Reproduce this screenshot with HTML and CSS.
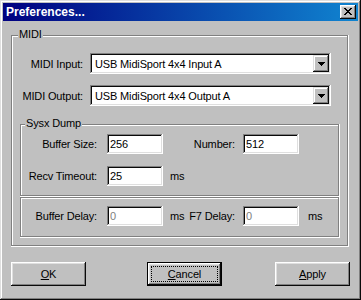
FILE: index.html
```html
<!DOCTYPE html>
<html lang="en">
<head>
    <meta charset="UTF-8">
    <meta name="viewport" content="width=device-width, initial-scale=1.0">
    <title>Preferences...</title>
    <link rel="stylesheet" href="styles.css">
</head>
<body>

    <div class="window">
        <div class="title-bar">
            <span class="title">Preferences...</span>
            <button class="close-btn" aria-label="Close">
                <svg width="8" height="7" viewBox="0 0 8 7"><path d="M0 0h2v1H0zM6 0h2v1H6zM1 1h2v1H1zM5 1h2v1H5zM2 2h4v1H2zM3 3h2v1H3zM2 4h4v1H2zM1 5h2v1H1zM5 5h2v1H5zM0 6h2v1H0zM6 6h2v1H6z" fill="#000"/></svg>
            </button>
        </div>

        <div class="client">
            <div class="group midi-group">
                <span class="group-label midi-legend">MIDI</span>

                <div class="combo-row">
                    <label class="midi-label">MIDI Input:</label>
                    <div class="combo">
                        <span class="combo-text">USB MidiSport 4x4 Input A</span>
                        <span class="drop-btn"><svg width="7" height="4" viewBox="0 0 7 4"><path d="M0 0h7v1H0zM1 1h5v1H1zM2 2h3v1H2zM3 3h1v1H3z" fill="#000"/></svg></span>
                    </div>
                </div>

                <div class="combo-row">
                    <label class="midi-label">MIDI Output:</label>
                    <div class="combo">
                        <span class="combo-text">USB MidiSport 4x4 Output A</span>
                        <span class="drop-btn"><svg width="7" height="4" viewBox="0 0 7 4"><path d="M0 0h7v1H0zM1 1h5v1H1zM2 2h3v1H2zM3 3h1v1H3z" fill="#000"/></svg></span>
                    </div>
                </div>

                <div class="group sysx-group">
                    <span class="group-label sysx-legend">Sysx Dump</span>

                    <div class="field-row">
                        <label class="field-label" for="bufferSize">Buffer Size:</label>
                        <input class="edit" type="text" id="bufferSize" value="256">
                        <div class="mid">
                            <label class="mid-label" for="number">Number:</label>
                        </div>
                        <input class="edit" type="text" id="number" value="512">
                    </div>

                    <div class="field-row">
                        <label class="field-label" for="recvTimeout">Recv Timeout:</label>
                        <input class="edit" type="text" id="recvTimeout" value="25">
                        <div class="mid">
                            <span class="unit">ms</span>
                        </div>
                    </div>
                </div>

                <div class="group delay-group">
                    <div class="field-row">
                        <label class="field-label" for="bufferDelay">Buffer Delay:</label>
                        <input class="edit" type="text" id="bufferDelay" value="0" disabled>
                        <div class="mid">
                            <span class="unit">ms</span>
                            <label class="mid-label" for="f7Delay">F7 Delay:</label>
                        </div>
                        <input class="edit" type="text" id="f7Delay" value="0" disabled>
                        <span class="unit-end">ms</span>
                    </div>
                </div>
            </div>

            <div class="buttons">
                <button class="btn"><u>O</u>K</button>
                <button class="btn btn-default btn-cancel"><u>C</u>ancel</button>
                <button class="btn btn-apply"><u>A</u>pply</button>
            </div>
        </div>
    </div>

</body>
</html>
```

FILE: styles.css
```css
body {
    font-family: 'Liberation Sans', Arial, sans-serif;
    font-size: 11px;
    letter-spacing: -0.15px;
    margin: 0;
    padding: 0;
    color: #000;
}

.window {
    width: 361px;
    height: 300px;
    box-sizing: border-box;
    padding: 3px;
    background-color: #c0c0c0;
    box-shadow: inset -1px -1px #0a0a0a, inset 1px 1px #dfdfdf, inset -2px -2px #808080, inset 2px 2px #fff;
}

.title-bar {
    height: 18px;
    display: flex;
    align-items: center;
    justify-content: space-between;
    padding: 0 2px 0 3px;
    background: linear-gradient(90deg, #000080, #1084d0);
}

.title {
    color: #fff;
    font-weight: bold;
    font-size: 12px;
    letter-spacing: 0;
}

.close-btn {
    width: 16px;
    height: 14px;
    padding: 0 1px 1px 0;
    border: none;
    background-color: #c0c0c0;
    display: flex;
    align-items: center;
    justify-content: center;
    box-shadow: inset -1px -1px #0a0a0a, inset 1px 1px #fff, inset -2px -2px #808080, inset 2px 2px #dfdfdf;
}

.close-btn svg,
.drop-btn svg {
    display: block;
}

/* etched group boxes */
.group {
    position: relative;
    box-sizing: border-box;
    box-shadow: inset -1px -1px #fff, inset -2px -2px #808080, inset 1px 1px #808080, inset 2px 2px #fff;
}

.group-label {
    position: absolute;
    top: -7px;
    line-height: 13px;
    padding: 0 1px;
    background-color: #c0c0c0;
}

.midi-legend {
    left: 7px;
}

.sysx-legend {
    left: 5px;
}

.midi-group {
    width: 338px;
    margin: 14px 0 0 8px;
    padding: 18px 0 9px;
}

.combo-row {
    display: flex;
    align-items: center;
    height: 21px;
}

.combo-row + .combo-row {
    margin-top: 11px;
}

.midi-label {
    width: 72px;
    margin-right: 7px;
    text-align: right;
}

.combo {
    width: 241px;
    height: 21px;
    box-sizing: border-box;
    padding: 2px;
    display: flex;
    align-items: center;
    background-color: #fff;
    box-shadow: inset -1px -1px #fff, inset 1px 1px #808080, inset -2px -2px #dfdfdf, inset 2px 2px #0a0a0a;
}

.combo-text {
    flex: 1;
    padding-left: 3px;
}

.drop-btn {
    width: 16px;
    height: 17px;
    display: flex;
    align-items: center;
    justify-content: center;
    background-color: #c0c0c0;
    box-shadow: inset -1px -1px #0a0a0a, inset 1px 1px #dfdfdf, inset -2px -2px #808080, inset 2px 2px #fff;
}

.sysx-group {
    width: 320px;
    margin: 18px 0 0 9px;
    padding: 10px 0 11px;
}

.delay-group {
    width: 320px;
    margin-left: 9px;
    padding: 9px 0 12px;
}

.field-row {
    display: flex;
    align-items: center;
    height: 20px;
}

.field-row + .field-row {
    margin-top: 12px;
}

.field-label {
    width: 77px;
    flex: none;
    text-align: right;
}

.edit {
    width: 56px;
    height: 20px;
    box-sizing: border-box;
    margin: 0 0 0 10px;
    padding: 0 2px 0 3px;
    border: none;
    font-family: 'Liberation Sans', Arial, sans-serif;
    font-size: 11px;
    letter-spacing: -0.15px;
    color: #000;
    background-color: #fff;
    box-shadow: inset -1px -1px #fff, inset 1px 1px #808080, inset -2px -2px #dfdfdf, inset 2px 2px #0a0a0a;
}

.edit:disabled {
    color: #808080;
    background-color: #fff;
}

.mid {
    width: 72px;
    display: flex;
    align-items: center;
}

.mid + .edit {
    margin-left: 8px;
}

.unit {
    padding-left: 7px;
}

.mid-label {
    margin-left: auto;
}

.unit-end {
    margin-left: 9px;
}

.buttons {
    display: flex;
    margin-top: 15px;
    padding-left: 8px;
}

.btn {
    width: 75px;
    height: 24px;
    box-sizing: border-box;
    padding: 0;
    border: none;
    font-family: 'Liberation Sans', Arial, sans-serif;
    font-size: 11px;
    letter-spacing: -0.15px;
    color: #000;
    background-color: #c0c0c0;
    box-shadow: inset -1px -1px #0a0a0a, inset 1px 1px #fff, inset -2px -2px #808080, inset 2px 2px #dfdfdf;
}

.btn-default {
    border: 1px solid #000;
    outline: 1px dotted #000;
    outline-offset: -5px;
}

.btn-cancel {
    margin-left: 61px;
}

.btn-apply {
    margin-left: 53px;
}
```
